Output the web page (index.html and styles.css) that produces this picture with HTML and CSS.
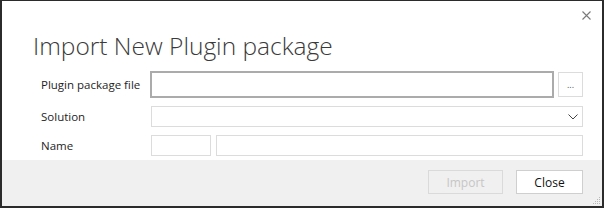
FILE: index.html
```html
<!DOCTYPE html>
<html lang="en">

<head>
    <meta charset="UTF-8">
    <meta name="viewport" content="width=device-width, initial-scale=1.0">
    <title>Import New Plugin package</title>
    <link rel="stylesheet" href="styles.css">
</head>

<body>
    <div class="dialog">
        <div class="top">
            <button class="close" title="Close">
                <svg width="9" height="9" viewBox="0 0 9 9">
                    <path d="M0.5 0.5 L8.5 8.5 M8.5 0.5 L0.5 8.5" stroke="#7a7a7a" stroke-width="1.1" fill="none" />
                </svg>
            </button>
        </div>
        <h1 class="title">Import New Plugin package</h1>
        <div class="form">
            <label class="label">Plugin package file</label>
            <div class="fileRow">
                <input class="fileInput" type="text">
                <button class="browse">...</button>
            </div>

            <label class="label">Solution</label>
            <div class="select">
                <svg width="10" height="6" viewBox="0 0 10 6">
                    <path d="M0.5 0.5 L5 5 L9.5 0.5" stroke="#444" stroke-width="1" fill="none" />
                </svg>
            </div>

            <label class="label">Name</label>
            <div class="nameRow">
                <input class="prefix" type="text">
                <input class="name" type="text">
            </div>
        </div>
        <div class="footer">
            <button class="btn" disabled>Import</button>
            <button class="btn">Close</button>
            <svg class="grip" width="9" height="9" viewBox="0 0 9 9" fill="#b8b8b8">
                <rect x="7" y="1" width="1" height="1" />
                <rect x="7" y="3" width="1" height="1" />
                <rect x="7" y="5" width="1" height="1" />
                <rect x="7" y="7" width="1" height="1" />
                <rect x="5" y="3" width="1" height="1" />
                <rect x="5" y="5" width="1" height="1" />
                <rect x="5" y="7" width="1" height="1" />
                <rect x="3" y="5" width="1" height="1" />
                <rect x="3" y="7" width="1" height="1" />
                <rect x="1" y="7" width="1" height="1" />
            </svg>
        </div>
    </div>
</body>

</html>
```

FILE: styles.css
```css
*{
    margin: 0;
    padding: 0;
    box-sizing: border-box;
}
body{
    width: 604px;
    height: 208px;
    font-family: "Segoe UI", "Open Sans", sans-serif;
    font-size: 12px;
    color: #222;
}
.dialog{
    position: relative;
    width: 604px;
    height: 208px;
    border: 2px solid #2b2b2b;
    border-top-width: 1px;
    background-color: #fff;
    display: flex;
    flex-direction: column;
}
.top{
    height: 28px;
    display: flex;
    justify-content: flex-end;
    align-items: center;
    padding-right: 8px;
}
.close{
    width: 15px;
    height: 15px;
    border: none;
    background: none;
    display: flex;
    align-items: center;
    justify-content: center;
}
.title{
    font-family: "Open Sans", sans-serif;
    font-weight: 300;
    font-size: 24.5px;
    line-height: 30px;
    color: #3a3a3a;
    padding-left: 31px;
    padding-top: 2px;
    margin-bottom: 10px;
}
.form{
    display: grid;
    grid-template-columns: 109px 1fr;
    row-gap: 8px;
    padding-left: 39px;
    padding-right: 19px;
    align-items: center;
}
.label{
    font-size: 11.5px;
    color: #1e1e1e;
}
.fileRow{
    display: flex;
    align-items: center;
    gap: 4px;
}
.fileInput{
    flex: 1;
    height: 27px;
    border: 2px solid #ababab;
    outline: none;
}
.browse{
    width: 25px;
    height: 25px;
    border: 1px solid #dcdcdc;
    background: #fff;
    font-size: 9px;
    color: #555;
    font-family: inherit;
    line-height: 18px;
}
.select{
    height: 21px;
    border: 1px solid #dcdcdc;
    margin-left: 1px;
    display: flex;
    justify-content: flex-end;
    align-items: center;
    padding-right: 4px;
}
.nameRow{
    display: flex;
    gap: 5px;
    margin-left: 1px;
}
.nameRow input{
    height: 21px;
    border: 1px solid #dcdcdc;
    outline: none;
}
.prefix{
    width: 60px;
}
.name{
    flex: 1;
}
.footer{
    margin-top: 4px;
    flex: 1;
    background-color: #f0f0f0;
    display: flex;
    justify-content: flex-end;
    align-items: flex-start;
    gap: 13px;
    padding: 10px 19px 0 0;
}
.btn{
    height: 24px;
    min-width: 67px;
    padding: 0 10px;
    background: #fff;
    border: 1px solid #cfcfcf;
    font-family: inherit;
    font-size: 12px;
    color: #111;
}
.btn:disabled{
    width: 75px;
    background: #f0f0f0;
    border-color: #dadada;
    color: #c6c6c6;
}
.grip{
    position: absolute;
    right: 1px;
    bottom: 1px;
}
```
